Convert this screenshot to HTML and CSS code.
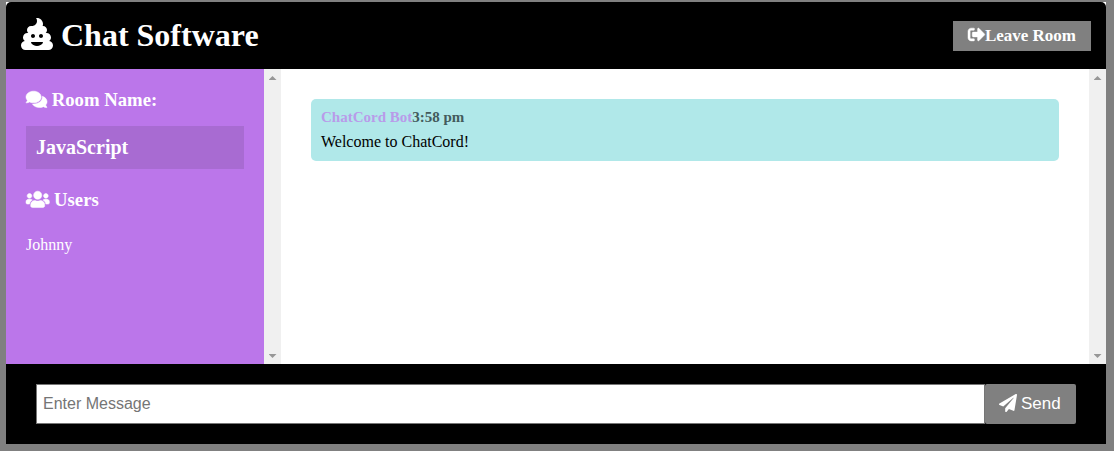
FILE: index.html
```html
<!DOCTYPE html>
<html lang="en">
<head>
<meta charset="utf-8">
<title>Chat Software</title>
<link rel="stylesheet" href="styles.css">
</head>
<body>
<div class="chat-container">
  <header class="chat-header">
    <h1><svg class="icon" viewBox="0 0 512 512"><path d="M451.4 369.1C468.700 356 480 335.400 480 312c0-39.800-32.200-72-72-72h-14.100c13.400-11.700 22.100-28.800 22.100-48 0-35.300-28.700-64-64-64h-5.900c3.600-10.100 5.900-20.700 5.900-32 0-53-43-96-96-96-5.200 0-10.200.7-15.100 1.500C250.300 14.600 256 30.600 256 48c0 44.200-35.800 80-80 80h-16c-35.300 0-64 28.700-64 64 0 19.200 8.700 36.300 22.100 48H104c-39.800 0-72 32.200-72 72 0 23.400 11.300 44 28.600 57.100C26.300 374.600 0 404.100 0 440c0 39.800 32.200 72 72 72h368c39.800 0 72-32.200 72-72 0-35.900-26.300-65.400-60.600-70.900zM192 256c17.700 0 32 14.300 32 32s-14.300 32-32 32-32-14.300-32-32 14.300-32 32-32zm159.500 139C341 422.900 293 448 256 448s-85-25.100-95.500-53c-2-5.300 2-11 7.800-11h175.400c5.800 0 9.800 5.700 7.800 11zM320 320c-17.700 0-32-14.300-32-32s14.300-32 32-32 32 14.300 32 32-14.300 32-32 32z"/></svg> Chat Software</h1>
    <a class="leave"><svg class="icon bold" viewBox="0 0 512 512"><path d="M497 273L329 441c-15 15-41 4.500-41-17v-96H152c-13.300 0-24-10.700-24-24v-96c0-13.300 10.700-24 24-24h136V88c0-21.400 25.900-32 41-17l168 168c9.300 9.400 9.300 24.600 0 34zM192 436v-40c0-6.600-5.400-12-12-12H96c-17.700 0-32-14.300-32-32V160c0-17.700 14.300-32 32-32h84c6.600 0 12-5.400 12-12V76c0-6.600-5.400-12-12-12H96c-53 0-96 43-96 96v192c0 53 43 96 96 96h84c6.600 0 12-5.400 12-12z"/></svg>Leave Room</a>
  </header>
  <main class="chat-main">
    <aside class="sidebar">
      <h3><svg class="icon wide bold" viewBox="0 0 576 512"><path d="M416 192c0-88.400-93.100-160-208-160S0 103.600 0 192c0 34.300 14.100 65.900 38 92-13.400 30.200-35.500 54.200-35.800 54.500-2.200 2.300-2.800 5.700-1.500 8.700S4.800 352 8 352c36.600 0 66.900-12.300 88.700-25 32.200 15.700 70.300 25 111.300 25 114.900 0 208-71.600 208-160zm122 220c23.900-26 38-57.700 38-92 0-66.900-53.500-124.200-129.300-148.100.9 6.600 1.300 13.300 1.300 20.100 0 105.900-107.700 192-240 192-10.800 0-21.300-.8-31.700-1.900C207.800 439.600 281.800 480 368 480c41 0 79.100-9.200 111.300-25 21.800 12.700 52.100 25 88.700 25 3.200 0 6.100-1.900 7.300-4.800 1.300-2.900.7-6.300-1.500-8.700-.3-.3-22.400-24.200-35.800-54.500z"/></svg> Room Name:</h3>
      <h2 class="room">JavaScript</h2>
      <h3><svg class="icon wider bold" viewBox="0 0 640 512"><path d="M96 224c35.300 0 64-28.700 64-64s-28.700-64-64-64-64 28.700-64 64 28.700 64 64 64zm448 0c35.300 0 64-28.700 64-64s-28.700-64-64-64-64 28.700-64 64 28.700 64 64 64zm32 32h-64c-17.600 0-33.500 7.100-45.100 18.600 40.300 22.100 68.900 62 75.100 109.400h66c17.700 0 32-14.300 32-32v-32c0-35.300-28.700-64-64-64zm-256 0c61.900 0 112-50.100 112-112S381.900 32 320 32 208 82.100 208 144s50.100 112 112 112zm76.800 32h-8.300c-20.800 10-43.900 16-68.500 16s-47.600-6-68.500-16h-8.300C179.600 288 128 339.600 128 403.200V432c0 26.500 21.500 48 48 48h288c26.500 0 48-21.500 48-48v-28.800c0-63.600-51.600-115.200-115.200-115.200zm-223.700-13.400C161.500 263.100 145.600 256 128 256H64c-35.300 0-64 28.700-64 64v32c0 17.700 14.300 32 32 32h65.900c6.300-47.400 34.900-87.300 75.200-109.400z"/></svg> Users</h3>
      <ul class="users"><li>Johnny</li></ul>
    </aside>
    <div class="scrollbar"><i class="arrow up"></i><i class="arrow down"></i></div>
    <section class="messages">
      <div class="message">
        <p class="meta">ChatCord Bot<span>3:58 pm</span></p>
        <p class="text">Welcome to ChatCord!</p>
      </div>
    </section>
    <div class="scrollbar"><i class="arrow up"></i><i class="arrow down"></i></div>
  </main>
  <form class="chat-form">
    <input type="text" placeholder="Enter Message">
    <button type="button" class="send"><svg class="icon" viewBox="0 0 512 512"><path d="M476 3.200L12.500 270.600c-18.100 10.400-15.800 35.600 2.200 43.200L121 358.400l287.300-253.200c5.500-4.900 13.300 2.600 8.600 8.300L176 407v80.500c0 23.600 28.500 32.900 42.500 15.800L282 426l124.600 52.200c14.200 6 30.400-2.900 33-18.200l72-432C515 7.800 493.300-6.800 476 3.200z"/></svg> Send</button>
  </form>
</div>
</body>
</html>
```
FILE: styles.css
```css
* { box-sizing: border-box; margin: 0; padding: 0; }
body {
  background: #808080;
  font: 16px "Liberation Serif", "Times New Roman", serif;
  padding: 2px 8px 7px 6px;
  overflow: hidden;
}
.chat-container { background: #fff; height: 442px; display: flex; flex-direction: column; }
.icon { width: 1em; height: 1em; fill: currentColor; vertical-align: -0.125em; overflow: visible; }
.bold { stroke: currentColor; stroke-width: 14px; }
.wide { width: 1.125em; }
.wider { width: 1.25em; }
.chat-header {
  background: #000; color: #fff; height: 67px; padding: 0 15px;
  border-radius: 5px 5px 0 0;
  display: flex; align-items: center; justify-content: space-between;
}
.chat-header h1 { font-size: 32px; line-height: 37px; }
.leave {
  background: #808080; font-size: 17px; font-weight: bold; line-height: 20px;
  padding: 5px 15px; height: 30px; margin-top: 1px;
}
.chat-main { display: flex; height: 295px; }
.sidebar { width: 258px; background: #bb76ea; color: #fff; padding: 20px 20px 0; }
.sidebar h3 { font-size: 18.72px; line-height: 22px; }
.room { font-size: 20px; line-height: 23px; padding: 10px; margin: 15px 0 20px; background: #a86bd2; }
.users { list-style: none; padding-top: 25px; }
.users li { line-height: 18px; }
.scrollbar {
  width: 17px; background: #f0f0f0; padding: 7px 0 6px;
  display: flex; flex-direction: column; align-items: center; justify-content: space-between;
}
.arrow { width: 8px; height: 4px; background: #979797; }
.up { clip-path: polygon(50% 0, 100% 100%, 0 100%); }
.down { clip-path: polygon(0 0, 100% 0, 50% 100%); }
.messages { flex: 1; padding: 30px; }
.message { background: #b0e8e9; border-radius: 5px; height: 62px; padding: 10px; }
.meta { font-size: 15px; font-weight: bold; line-height: 17px; color: #b99be9; }
.meta span { color: #435b5c; }
.text { line-height: 18px; margin-top: 7px; color: #000; }
.chat-form { background: #000; height: 80px; padding: 20px 30px; display: flex; }
.chat-form input {
  flex: 1; min-width: 0; height: 40px; padding: 0 6px; border: 1px solid #767676;
  border-radius: 0; background: #fff;
  font: 16px "Liberation Sans", Arial, sans-serif;
}
.chat-form input::placeholder { color: #757575; }
.send {
  width: 91px; height: 40px; border: 0; border-radius: 2px; padding-right: 1px;
  background: #808080; color: #fff; font: 17px "Liberation Sans", Arial, sans-serif;
}
.send .icon { width: 18px; height: 18px; margin-right: -1px; vertical-align: -3px; }
```
